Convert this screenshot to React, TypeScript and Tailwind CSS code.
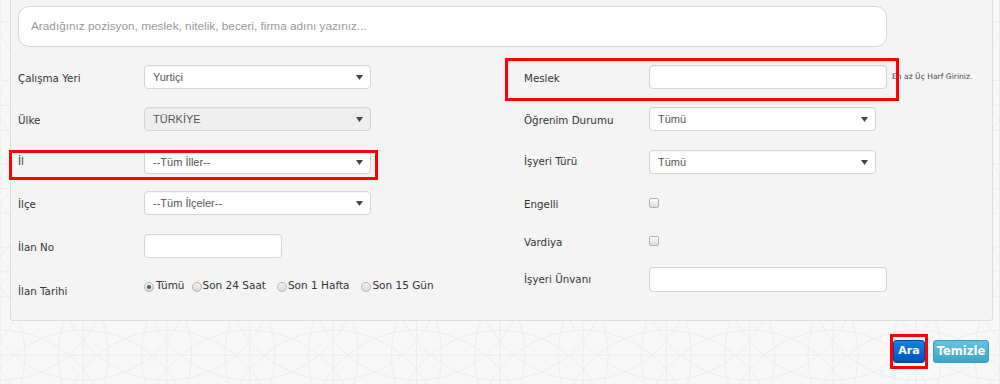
import React from "react";

const labelCls = "text-[10.3px] text-[#333] [font-family:'DejaVu_Sans',Verdana,sans-serif]";
const radioText = "text-[10.5px] text-[#333] [font-family:'DejaVu_Sans',Verdana,sans-serif]";

function Select({ value, disabled, w = "w-[227px]" }: { value: string; disabled?: boolean; w?: string }) {
  return (
    <div
      className={`${w} h-[24px] rounded-[4px] border border-[#d4d4d4] flex items-center justify-between pl-[8px] pr-[7px] text-[11px] text-[#555] [font-family:'Liberation_Sans',Arial,sans-serif] shadow-[inset_0_1px_1px_rgba(0,0,0,0.04)] ${
        disabled ? "bg-[#eeeeee]" : "bg-white"
      }`}
    >
      <span>{value}</span>
      <svg width="7" height="5" viewBox="0 0 7 5">
        <path d="M0 0 L7 0 L3.5 5 Z" fill="#444" />
      </svg>
    </div>
  );
}

function TextInput({ w }: { w: string }) {
  return <div className={`${w} h-[24px] rounded-[4px] border border-[#d4d4d4] bg-white shadow-[inset_0_1px_1px_rgba(0,0,0,0.04)]`} />;
}

function Radio({ checked }: { checked?: boolean }) {
  return (
    <span className="inline-flex w-[10px] h-[10px] rounded-full border border-[#b5b5b5] bg-gradient-to-b from-[#f4f4f4] to-[#d9d9d9] items-center justify-center mt-[4px]">
      {checked && <span className="w-[4px] h-[4px] rounded-full bg-[#555]" />}
    </span>
  );
}

function Checkbox() {
  return <span className="block w-[10px] h-[10px] rounded-[2px] border border-[#b0b0b0] bg-gradient-to-b from-[#fbfbfb] to-[#dcdcdc]" />;
}

function Background() {
  const lines: React.ReactNode[] = [];
  const step = 83.3;
  for (let i = 0; i < 13; i++) {
    lines.push(<line key={"v" + i} x1={i * step} y1={0} x2={i * step} y2={384} stroke="#ececec" strokeWidth="1" />);
  }
  for (let j = 0; j < 6; j++) {
    lines.push(<line key={"h" + j} x1={0} y1={22 + j * 83.3} x2={1000} y2={22 + j * 83.3} stroke="#ececec" strokeWidth="1" />);
  }
  for (let i = -1; i < 14; i++) {
    for (let j = 0; j < 6; j++) {
      lines.push(
        <circle key={"c" + i + "-" + j} cx={i * step} cy={22 + j * 83.3} r={step * 1.3} fill="none" stroke="#ededed" strokeWidth="1" />
      );
    }
  }
  return (
    <svg className="absolute inset-0" width="1000" height="384" viewBox="0 0 1000 384">
      {lines}
    </svg>
  );
}

export default function App() {
  return (
    <div className="relative w-[1000px] h-[384px] overflow-hidden bg-[#f8f8f8]">
      <Background />
      <div className="relative flex flex-col">
        {/* Panel */}
        <div className="ml-[10px] w-[983px] h-[321px] bg-[#f4f4f4] border border-t-0 border-[#dcdcdc] rounded-b-[3px] pl-[7px] pt-[6px]">
          <div className="w-[869px] h-[41px] rounded-[11px] border border-[#d6d6d6] bg-white flex items-center pl-[12px] text-[11.8px] text-[#999] [font-family:'Liberation_Sans',Arial,sans-serif]">
            Aradığınız pozisyon, meslek, nitelik, beceri, firma adını yazınız...
          </div>

          <div className="flex mt-[18px]">
            {/* Left column */}
            <div className="w-[506px] flex flex-col">
              <div className="flex items-center h-[24px]">
                <div className={`w-[126px] pt-[3px] ${labelCls}`}>Çalışma Yeri</div>
                <Select value="Yurtiçi" />
              </div>
              <div className="flex items-center h-[24px] mt-[18px]">
                <div className={`w-[126px] pt-[3px] ${labelCls}`}>Ülke</div>
                <Select value="TÜRKİYE" disabled />
              </div>
              <div className="flex items-center h-[24px] mt-[19px]">
                <div className={`w-[126px] pt-[0px] ${labelCls}`}>İl</div>
                <Select value="--Tüm İller--" />
              </div>
              <div className="flex items-center h-[24px] mt-[17px]">
                <div className={`w-[126px] pt-[3px] ${labelCls}`}>İlçe</div>
                <Select value="--Tüm İlçeler--" />
              </div>
              <div className="flex items-center h-[24px] mt-[19px]">
                <div className={`w-[126px] pt-[3px] ${labelCls}`}>İlan No</div>
                <TextInput w="w-[138px]" />
              </div>
              <div className="flex items-start mt-[20px]">
                <div className={`w-[126px] pt-[6px] ${labelCls}`}>İlan Tarihi</div>
                <div className={`flex items-start ${radioText}`}>
                  <Radio checked />
                  <span className="ml-[2px]">Tümü</span>
                  <span className="ml-[7px]"><Radio /></span>
                  <span className="ml-[1px]">Son 24 Saat</span>
                  <span className="ml-[11px]"><Radio /></span>
                  <span className="ml-[1px]">Son 1 Hafta</span>
                  <span className="ml-[12px]"><Radio /></span>
                  <span className="ml-[1px]">Son 15 Gün</span>
                </div>
              </div>
            </div>

            {/* Right column */}
            <div className="flex flex-col">
              <div className="flex items-center h-[24px]">
                <div className={`w-[125px] pt-[3px] ${labelCls}`}>Meslek</div>
                <TextInput w="w-[238px]" />
                <span className="ml-[5px] text-[7.6px] text-[#444] [font-family:'DejaVu_Sans',Verdana,sans-serif]">En az Üç Harf Giriniz.</span>
              </div>
              <div className="flex items-center h-[24px] mt-[18px]">
                <div className={`w-[125px] pt-[3px] ${labelCls}`}>Öğrenim Durumu</div>
                <Select value="Tümü" />
              </div>
              <div className="flex items-center h-[24px] mt-[19px]">
                <div className={`w-[125px] pt-[0px] ${labelCls}`}>İşyeri Türü</div>
                <Select value="Tümü" />
              </div>
              <div className="flex items-center h-[24px] mt-[17px]">
                <div className={`w-[125px] pt-[4px] ${labelCls}`}>Engelli</div>
                <Checkbox />
              </div>
              <div className="flex items-center h-[24px] mt-[14px]">
                <div className={`w-[125px] pt-[3px] ${labelCls}`}>Vardiya</div>
                <Checkbox />
              </div>
              <div className="flex items-center h-[25px] mt-[14px]">
                <div className={`w-[125px] pt-[0px] ${labelCls}`}>İşyeri Ünvanı</div>
                <TextInput w="w-[238px] h-[25px]" />
              </div>
            </div>
          </div>
        </div>

        {/* Buttons */}
        <div className="flex justify-end mt-[19px] pr-[11px] gap-[8px]">
          <button className="w-[32px] h-[23px] rounded-[3px] border border-[#0046a8] bg-gradient-to-b from-[#1a7fe6] to-[#0052b8] text-white text-[11px] font-bold [font-family:'DejaVu_Sans',Verdana,sans-serif]">
            Ara
          </button>
          <button className="w-[56px] h-[23px] rounded-[3px] border border-[#3f9cbc] bg-gradient-to-b from-[#63c3e0] to-[#3ea3c6] text-white text-[11.5px] font-bold [font-family:'DejaVu_Sans',Verdana,sans-serif]">
            Temizle
          </button>
        </div>
      </div>

      {/* Red highlight annotations */}
      <div className="absolute left-[505px] top-[58px] w-[394px] h-[43px] border-[3px] border-[#ff0000] pointer-events-none" />
      <div className="absolute left-[9px] top-[150px] w-[369px] h-[30px] border-[3px] border-[#ff0000] pointer-events-none" />
      <div className="absolute left-[890px] top-[334px] w-[38px] h-[35px] border-[3px] border-[#ff0000] pointer-events-none" />
    </div>
  );
}
